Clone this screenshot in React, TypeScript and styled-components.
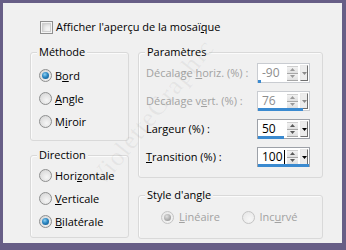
import React from 'react';
import styled, { createGlobalStyle, css } from 'styled-components';

const GlobalStyle = createGlobalStyle`
  html, body {
    margin: 0;
    padding: 0;
    background: #675e86;
  }

  body {
    font-family: "Open Sans", "Noto Sans", sans-serif;
    font-size: 11px;
    color: #000;
  }
`;

type Param = {
  label: React.ReactNode;
  value: string;
  ratio: number;
  disabled?: boolean;
  caret?: boolean;
};

const params: Param[] = [
  { label: <>Décalage <u>h</u>oriz. (%) :</>, value: '-90', ratio: 0.05, disabled: true },
  { label: <>Décalage v<u>e</u>rt. (%) :</>, value: '76', ratio: 0.88, disabled: true },
  { label: <>Lar<u>g</u>eur (%) :</>, value: '50', ratio: 0.5 },
  { label: <><u>T</u>ransition (%) :</>, value: '100', ratio: 1, caret: true },
];

function Radio({ checked, disabled }: { checked?: boolean; disabled?: boolean }) {
  return (
    <RadioCircle $disabled={disabled}>
      {checked ? <RadioDot $disabled={disabled} /> : null}
    </RadioCircle>
  );
}

function Spinner({ value, ratio, disabled, caret }: Param) {
  const arrow = disabled ? '#9a9a9a' : '#5a5a5a';
  return (
    <SpinBox $disabled={disabled}>
      <SpinValue $disabled={disabled}>
        {value}
        {caret ? <Caret /> : null}
      </SpinValue>
      <SpinPair>
        <SpinHalf>
          <svg width="5" height="3" viewBox="0 0 5 3">
            <path d="M0 3 L2.5 0 L5 3 Z" fill={arrow} />
          </svg>
        </SpinHalf>
        <SpinHalf>
          <svg width="5" height="3" viewBox="0 0 5 3">
            <path d="M0 0 L2.5 3 L5 0 Z" fill={arrow} />
          </svg>
        </SpinHalf>
      </SpinPair>
      <DropButton>
        <svg width="5" height="3" viewBox="0 0 5 3">
          <path d="M0 0 L2.5 3 L5 0 Z" fill={disabled ? '#8a8a8a' : '#000'} />
        </svg>
      </DropButton>
      <ValueBar style={{ width: `${Math.max(1, Math.round(51 * ratio))}px` }} />
    </SpinBox>
  );
}

export default function App() {
  return (
    <>
      <GlobalStyle />
      <Window>
        <CheckRow>
          <CheckBox />
          <span>Afficher l'aperçu de la mosaï<u>q</u>ue</span>
        </CheckRow>

        <Columns>
          <LeftColumn>
            <Group $height={89}>
              <Legend>Méthode</Legend>
              <RadioList $top={11}>
                <RadioRow>
                  <Radio checked />
                  <span>B<u>o</u>rd</span>
                </RadioRow>
                <RadioRow>
                  <Radio />
                  <span><u>A</u>ngle</span>
                </RadioRow>
                <RadioRow>
                  <Radio />
                  <span>M<u>i</u>roir</span>
                </RadioRow>
              </RadioList>
            </Group>

            <Group $height={83}>
              <Legend>Direction</Legend>
              <RadioList $top={8}>
                <RadioRow>
                  <Radio />
                  <span>Hori<u>z</u>ontale</span>
                </RadioRow>
                <RadioRow>
                  <Radio />
                  <span><u>V</u>erticale</span>
                </RadioRow>
                <RadioRow>
                  <Radio checked />
                  <span><u>B</u>ilatérale</span>
                </RadioRow>
              </RadioList>
            </Group>
          </LeftColumn>

          <RightColumn>
            <Group $height={126}>
              <Legend>Paramètres</Legend>
              <ParamGrid>
                {params.map((p) => (
                  <React.Fragment key={p.value}>
                    <ParamLabel $disabled={p.disabled}>{p.label}</ParamLabel>
                    <Spinner {...p} />
                  </React.Fragment>
                ))}
              </ParamGrid>
            </Group>

            <Group $height={44}>
              <Legend>Style d'angle</Legend>
              <StyleRow>
                <StyleOption>
                  <Radio checked disabled />
                  <DisabledText><u>L</u>inéaire</DisabledText>
                </StyleOption>
                <StyleOption>
                  <Radio disabled />
                  <DisabledText>Inc<u>u</u>rvé</DisabledText>
                </StyleOption>
              </StyleRow>
            </Group>
          </RightColumn>
        </Columns>

        <Watermark>VioletteGraphic</Watermark>
      </Window>
    </>
  );
}

const Window = styled.div`
  position: relative;
  box-sizing: border-box;
  width: 346px;
  height: 250px;
  padding: 17px 0 0 27px;
  overflow: hidden;
  border-style: solid;
  border-color: #675e86;
  border-width: 3px 4px 7px 3px;
  background: #f0f0f0;
`;

const CheckRow = styled.label`
  display: flex;
  align-items: center;
  gap: 3px;
  height: 14px;
  margin-left: 10px;
  line-height: 14px;
`;

const CheckBox = styled.span`
  box-sizing: border-box;
  width: 13px;
  height: 13px;
  border: 1px solid #8f8f8f;
  background: #f4f4f4;
  box-shadow: inset 0 0 0 1px #f4f4f4, inset 0 0 0 2px #cfcfcf, inset 2px 2px 4px #bdbdbd;
`;

const Columns = styled.div`
  display: flex;
  align-items: flex-start;
  gap: 9px;
  margin-top: 18px;
`;

const LeftColumn = styled.div`
  display: flex;
  flex-direction: column;
  gap: 14px;
  width: 99px;
`;

const RightColumn = styled.div`
  display: flex;
  flex-direction: column;
  gap: 17px;
  width: 185px;
`;

const Group = styled.div<{ $height: number }>`
  position: relative;
  box-sizing: border-box;
  height: ${(p) => p.$height}px;
  border: 1px solid #d9d9d9;
  border-radius: 3px;
  box-shadow: inset 1px 1px 0 #fbfbfb;
`;

const Legend = styled.span`
  position: absolute;
  top: -8px;
  left: 6px;
  padding: 0 2px;
  line-height: 14px;
  background: #f0f0f0;
`;

const RadioList = styled.div<{ $top: number }>`
  display: flex;
  flex-direction: column;
  padding: ${(p) => p.$top}px 0 0 8px;
`;

const RadioRow = styled.div`
  display: flex;
  align-items: center;
  gap: 3px;
  height: 23px;
  line-height: 14px;
`;

const RadioCircle = styled.span<{ $disabled?: boolean }>`
  box-sizing: border-box;
  display: flex;
  align-items: center;
  justify-content: center;
  width: 13px;
  height: 13px;
  flex-shrink: 0;
  border: 1px solid #8e8f8f;
  border-radius: 50%;
  background: radial-gradient(circle at 60% 65%, #f6f6f6 0%, #dcdcdc 70%, #cfcfcf 100%);

  ${(p) =>
    p.$disabled &&
    css`
      border-color: #c4c4c4;
      background: radial-gradient(circle at 60% 65%, #f7f7f7 0%, #e8e8e8 80%);
    `}
`;

const RadioDot = styled.span<{ $disabled?: boolean }>`
  width: 7px;
  height: 7px;
  border-radius: 50%;
  background: radial-gradient(circle at 40% 35%, #8fd1f2 0%, #2b86c2 45%, #0b4f80 100%);

  ${(p) =>
    p.$disabled &&
    css`
      background: radial-gradient(circle at 40% 35%, #e0e0e0 0%, #a9a9a9 60%, #8c8c8c 100%);
    `}
`;

const ParamGrid = styled.div`
  display: grid;
  grid-template-columns: 111px 53px;
  row-gap: 8px;
  align-items: center;
  padding: 10px 0 0 7px;
`;

const ParamLabel = styled.span<{ $disabled?: boolean }>`
  line-height: 14px;
  white-space: nowrap;
  color: ${(p) => (p.$disabled ? '#a2a2a2' : '#000')};
`;

const SpinBox = styled.div<{ $disabled?: boolean }>`
  position: relative;
  box-sizing: border-box;
  display: flex;
  align-items: center;
  width: 53px;
  height: 20px;
  padding: 1px 1px 1px 0;
  border: 1px solid ${(p) => (p.$disabled ? '#c9ccd1' : '#9da1a8')};
  background: #fff;
`;

const SpinValue = styled.span<{ $disabled?: boolean }>`
  display: flex;
  align-items: center;
  flex: 1;
  padding-left: 4px;
  font-size: 12px;
  line-height: 14px;
  color: ${(p) => (p.$disabled ? '#8d8d8d' : '#000')};
`;

const Caret = styled.span`
  width: 1px;
  height: 14px;
  margin-left: 1px;
  background: #000;
`;

const SpinPair = styled.div`
  display: flex;
  flex-direction: column;
  width: 11px;
  height: 14px;
  margin-right: 2px;
  border-top: 1px solid #cfcfcf;
`;

const SpinHalf = styled.span`
  display: flex;
  align-items: center;
  justify-content: center;
  flex: 1;
  border-bottom: 1px solid #a8a8a8;
  background: linear-gradient(#f2f2f2, #e0e0e0);
`;

const DropButton = styled.span`
  box-sizing: border-box;
  display: flex;
  align-items: center;
  justify-content: center;
  width: 8px;
  height: 16px;
  border-right: 1px solid #6e6e6e;
  border-bottom: 1px solid #6e6e6e;
  border-left: 1px solid #e8e8e8;
  border-top: 1px solid #e8e8e8;
  background: #ececec;
`;

const ValueBar = styled.span`
  position: absolute;
  left: 0;
  bottom: -1px;
  height: 3px;
  background: #3a8ad0;
`;

const StyleRow = styled.div`
  display: flex;
  align-items: center;
  height: 14px;
  padding: 14px 0 0 22px;
`;

const StyleOption = styled.div`
  display: flex;
  align-items: center;
  gap: 5px;
  width: 81px;
  line-height: 14px;
`;

const DisabledText = styled.span`
  color: #a2a2a2;
`;

const Watermark = styled.span`
  position: absolute;
  left: 104px;
  top: 160px;
  font-family: "Liberation Serif", serif;
  font-size: 26px;
  letter-spacing: 1px;
  color: rgba(120, 120, 120, 0.09);
  transform: rotate(-51deg);
  transform-origin: 0 100%;
  pointer-events: none;
  white-space: nowrap;
`;
